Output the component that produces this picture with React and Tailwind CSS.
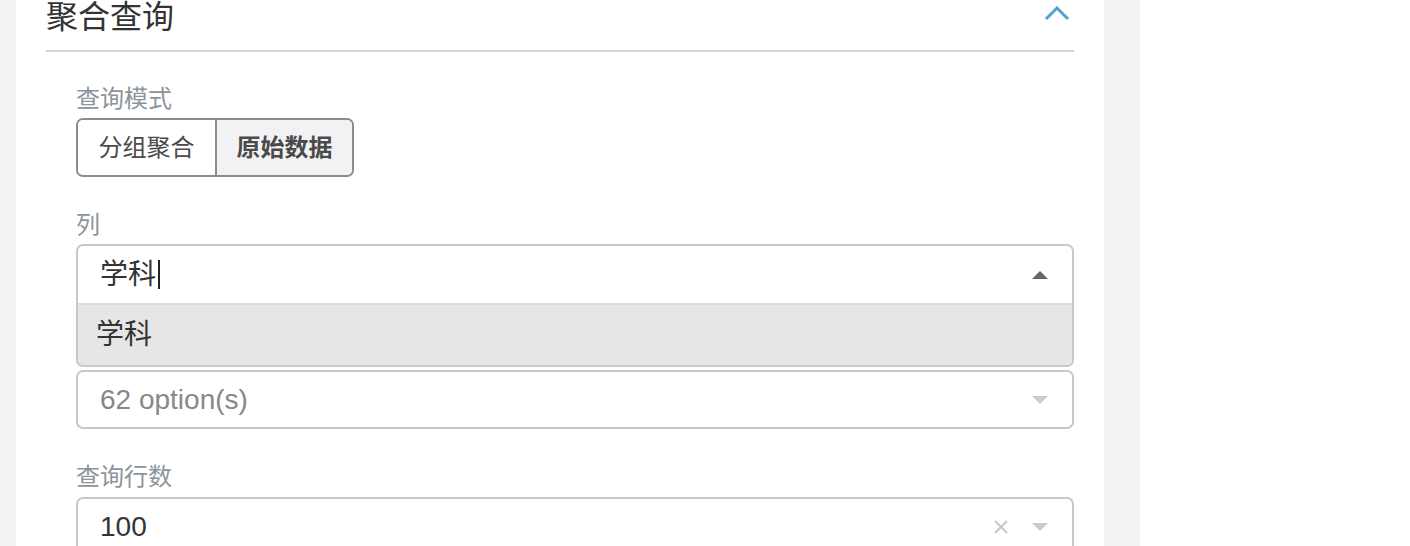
import React from 'react';

const font = { fontFamily: '"Liberation Sans", "Noto Sans CJK SC", sans-serif' };

const Caret = ({ up, color }) => (
  <svg width="16" height="8" viewBox="0 0 16 8" className="shrink-0">
    {up ? <polygon points="0,8 8,0 16,8" fill={color} /> : <polygon points="0,0 16,0 8,8" fill={color} />}
  </svg>
);

const Label = ({ children, className = '' }) => (
  <div className={`text-[24px] leading-[24px] text-[#8c949b] ${className}`}>{children}</div>
);

export default function App() {
  return (
    <div className="flex h-[546px] w-[1410px] overflow-hidden bg-white" style={font}>
      <div className="w-[16px] bg-[#f3f3f3]" />

      {/* Main panel */}
      <div className="w-[1088px] bg-white px-[30px]">
        {/* Section header */}
        <div className="flex h-[52px] items-start justify-between border-b-2 border-[#d1d5da]">
          <span className="text-[32px] leading-[34px] text-[#333]">聚合查询</span>
          <svg width="26" height="16" viewBox="0 0 26 16" className="mr-[4px] mt-[5px]">
            <polyline points="2,14 13,3 24,14" fill="none" stroke="#4ba6c9" strokeWidth="3" />
          </svg>
        </div>

        <div className="pl-[30px]">
          {/* Query mode */}
          <Label className="mt-[35px]">查询模式</Label>
          <div className="mt-[7px] flex h-[59px] w-[278px] overflow-hidden rounded-[7px] border-2 border-[#8c8c8c]">
            <button className="flex w-[137px] items-center justify-center bg-white text-[24px] text-[#4a4a4a]">分组聚合</button>
            <button className="flex flex-1 items-center justify-center border-l-2 border-[#8c8c8c] bg-[#f2f2f4] text-[24px] font-bold text-[#4a4a4a]">原始数据</button>
          </div>

          {/* Columns */}
          <Label className="mt-[36px]">列</Label>
          <div className="mt-[7px] overflow-hidden rounded-[7px] border-2 border-[#c8c8c8]">
            <div className="flex h-[57px] items-center justify-between pl-[22px] pr-[24px]">
              <div className="flex items-center text-[28px] text-[#333]">
                学科
                <span className="ml-[2px] h-[29px] w-[2px] bg-[#222]" />
              </div>
              <Caret up color="#666" />
            </div>
            <div className="flex h-[62px] items-center border-t-2 border-[#dadada] bg-[#e6e6e6] pl-[18px] text-[28px] text-[#333]">
              学科
            </div>
          </div>
          <div className="mt-[3px] flex h-[59px] items-center justify-between rounded-[7px] border-2 border-[#c8c8c8] pl-[22px] pr-[24px]">
            <span className="text-[28px] text-[#888]">62 option(s)</span>
            <Caret color="#cccccc" />
          </div>

          {/* Row limit */}
          <Label className="mt-[36px]">查询行数</Label>
          <div className="mt-[8px] flex h-[59px] items-center justify-between rounded-[7px] border-2 border-[#c8c8c8] pl-[22px] pr-[24px]">
            <span className="text-[28px] text-[#333]">100</span>
            <div className="flex items-center gap-[24px]">
              <svg width="14" height="14" viewBox="0 0 14 14">
                <path d="M1 1 L13 13 M13 1 L1 13" stroke="#c8c8c8" strokeWidth="2" />
              </svg>
              <Caret color="#cccccc" />
            </div>
          </div>
        </div>
      </div>

      <div className="w-[36px] bg-[#f3f3f3]" />
      <div className="flex-1 bg-white" />
    </div>
  );
}
